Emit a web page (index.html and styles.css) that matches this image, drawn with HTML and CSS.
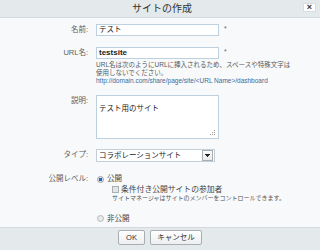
FILE: index.html
```html
<!DOCTYPE html>
<html lang="ja">
<head>
<meta charset="utf-8">
<title>サイトの作成</title>
<link rel="stylesheet" href="styles.css">
</head>
<body>
<div class="dialog">
  <div class="titlebar">
    <span class="title">サイトの作成</span>
    <span class="close">×</span>
  </div>
  <div class="body">
    <div class="row row-name">
      <label class="lbl">名前:</label>
      <div class="field">
        <div class="input"><span class="val">テスト</span></div>
        <span class="req">*</span>
      </div>
    </div>
    <div class="row row-url">
      <label class="lbl">URL名:</label>
      <div class="field-col">
        <div class="field">
          <div class="input"><span class="val bold">testsite</span></div>
          <span class="req">*</span>
        </div>
        <div class="help">URL名は次のようにURLに挿入されるため、スペースや特殊文字は<br>使用しないでください。</div>
        <div class="help link">http://domain.com/share/page/site/&lt;URL Name&gt;/dashboard</div>
      </div>
    </div>
    <div class="row row-desc">
      <label class="lbl">説明:</label>
      <div class="textarea">
        <span class="val">テスト用のサイト</span>
        <svg class="grip" width="6" height="6" viewBox="0 0 6 6">
          <rect x="4" y="0" width="1" height="1" fill="#999"/>
          <rect x="2" y="2" width="1" height="1" fill="#999"/>
          <rect x="4" y="2" width="1" height="1" fill="#999"/>
          <rect x="0" y="4" width="1" height="1" fill="#999"/>
          <rect x="2" y="4" width="1" height="1" fill="#999"/>
          <rect x="4" y="4" width="1" height="1" fill="#999"/>
        </svg>
      </div>
    </div>
    <div class="row row-type">
      <label class="lbl">タイプ:</label>
      <div class="select">
        <span class="val">コラボレーションサイト</span>
        <span class="dd">
          <svg width="5" height="3" viewBox="0 0 5 3"><path d="M0 0h5v1h-1v1h-1v1h-1v-1h-1v-1h-1z" fill="#222"/></svg>
        </span>
      </div>
    </div>
    <div class="row row-vis">
      <label class="lbl">公開レベル:</label>
      <div class="vis">
        <div class="opt"><span class="radio on"></span><span class="opt-text">公開</span></div>
        <div class="sub">
          <div class="opt"><span class="check"></span><span class="chk-text">条件付き公開サイトの参加者</span></div>
          <div class="note">サイトマネージャはサイトのメンバーをコントロールできます。</div>
        </div>
      </div>
    </div>
    <div class="row row-priv">
      <span class="lbl"></span>
      <div class="opt"><span class="radio"></span><span class="opt-text">非公開</span></div>
    </div>
  </div>
  <div class="footer">
    <button class="btn btn-ok">OK</button>
    <button class="btn btn-cancel">キャンセル</button>
  </div>
</div>
</body>
</html>
```
FILE: styles.css
```css
* { box-sizing: border-box; }
html, body { margin: 0; padding: 0; }
body {
  width: 320px;
  height: 250px;
  overflow: hidden;
  background: #f7f9fa;
  font-family: "Liberation Sans", "Noto Sans CJK JP", sans-serif;
  color: #333;
}
.dialog {
  display: flex;
  flex-direction: column;
  height: 250px;
}
.titlebar {
  position: relative;
  height: 18px;
  background: #e4e9eb;
  border-bottom: 1px solid #d3d9dc;
  display: flex;
  align-items: center;
  justify-content: center;
}
.title {
  font-size: 10px;
  color: #333;
  line-height: 17px;
  padding-left: 4px;
}
.close {
  position: absolute;
  right: 4px;
  top: 3px;
  width: 13px;
  height: 9px;
  background: #fff;
  border: 1px solid #d8dde0;
  font-size: 9px;
  line-height: 7px;
  font-weight: bold;
  text-align: center;
  color: #333;
}
.body {
  flex: 1;
  padding-top: 6px;
}
.row {
  display: grid;
  grid-template-columns: 88px 1fr;
  column-gap: 8px;
  align-items: start;
}
.lbl {
  font-size: 7.5px;
  line-height: 12px;
  color: #5c5c5c;
  text-align: right;
}
.field {
  display: flex;
  align-items: flex-start;
}
.field-col {
  display: flex;
  flex-direction: column;
}
.input {
  width: 123px;
  height: 12px;
  background: #fff;
  border: 1px solid #bcd0e0;
  padding-left: 2px;
  display: flex;
  align-items: center;
}
.val {
  font-size: 7.5px;
  line-height: 10px;
  color: #222;
}
.bold {
  font-weight: bold;
  font-size: 8px;
}
.req {
  font-size: 7px;
  color: #666;
  margin-left: 5px;
  line-height: 10px;
}
.help {
  font-size: 6.5px;
  line-height: 8px;
  color: #5a5a5a;
  white-space: nowrap;
}
.row-url .field + .help { margin-top: 2px; }
.link {
  font-size: 6.5px;
  color: #3b6b9a;
}
.row-url { margin-top: 11px; }
.row-desc { margin-top: 10px; }
.textarea {
  position: relative;
  width: 123px;
  height: 44px;
  background: #fff;
  border: 1px solid #bcd0e0;
  padding: 1px 2px;
}
.grip {
  position: absolute;
  right: 2px;
  bottom: 2px;
}
.row-type { margin-top: 10px; }
.select {
  width: 119px;
  height: 13px;
  background: #fff;
  border: 1px solid #c3ced7;
  display: flex;
  align-items: center;
  justify-content: space-between;
  padding: 0 1px 0 2px;
}
.dd {
  width: 11px;
  height: 11px;
  border: 1px solid #a7afb5;
  background: linear-gradient(#fdfdfd, #e8e8e8);
  display: flex;
  align-items: center;
  justify-content: center;
}
.dd svg { display: block; }
.row-vis { margin-top: 11px; }
.vis {
  display: flex;
  flex-direction: column;
}
.opt {
  display: flex;
  align-items: center;
  height: 12px;
}
.radio {
  width: 7px;
  height: 7px;
  border-radius: 50%;
  border: 1px solid #b5b9bc;
  background: #e7e9ea;
  margin-left: 1px;
  margin-right: 3px;
  flex: none;
}
.radio.on {
  background: radial-gradient(circle, #2a64c8 0 1.6px, #dfe3e6 2px);
  border-color: #98a0a6;
}
.opt-text {
  font-size: 7.5px;
  line-height: 12px;
  color: #444;
}
.sub {
  margin-left: 16px;
}
.sub .opt { height: 9px; }
.check {
  width: 7px;
  height: 7px;
  border: 1px solid #a9afb3;
  background: #e2e4e6;
  margin-right: 2px;
  flex: none;
}
.chk-text {
  font-size: 7.8px;
  line-height: 9px;
  color: #444;
}
.note {
  font-size: 6px;
  line-height: 8px;
  color: #555;
  white-space: nowrap;
}
.row-priv { margin-top: 12px; }
.row-priv .opt { height: 9px; }
.footer {
  height: 23px;
  background: #e4e9eb;
  border-top: 1px solid #d3d9dc;
  display: flex;
  justify-content: center;
  align-items: flex-start;
  padding-top: 2px;
  gap: 5px;
}
.btn {
  height: 15px;
  padding: 0;
  border: 1px solid #a8aeb3;
  border-radius: 2px;
  background: linear-gradient(#ffffff, #eceeef);
  font-family: "Liberation Sans", "Noto Sans CJK JP", sans-serif;
  font-size: 7.5px;
  color: #333;
  line-height: 13px;
}
.btn-ok { width: 27px; }
.btn-cancel { width: 52px; }
```
